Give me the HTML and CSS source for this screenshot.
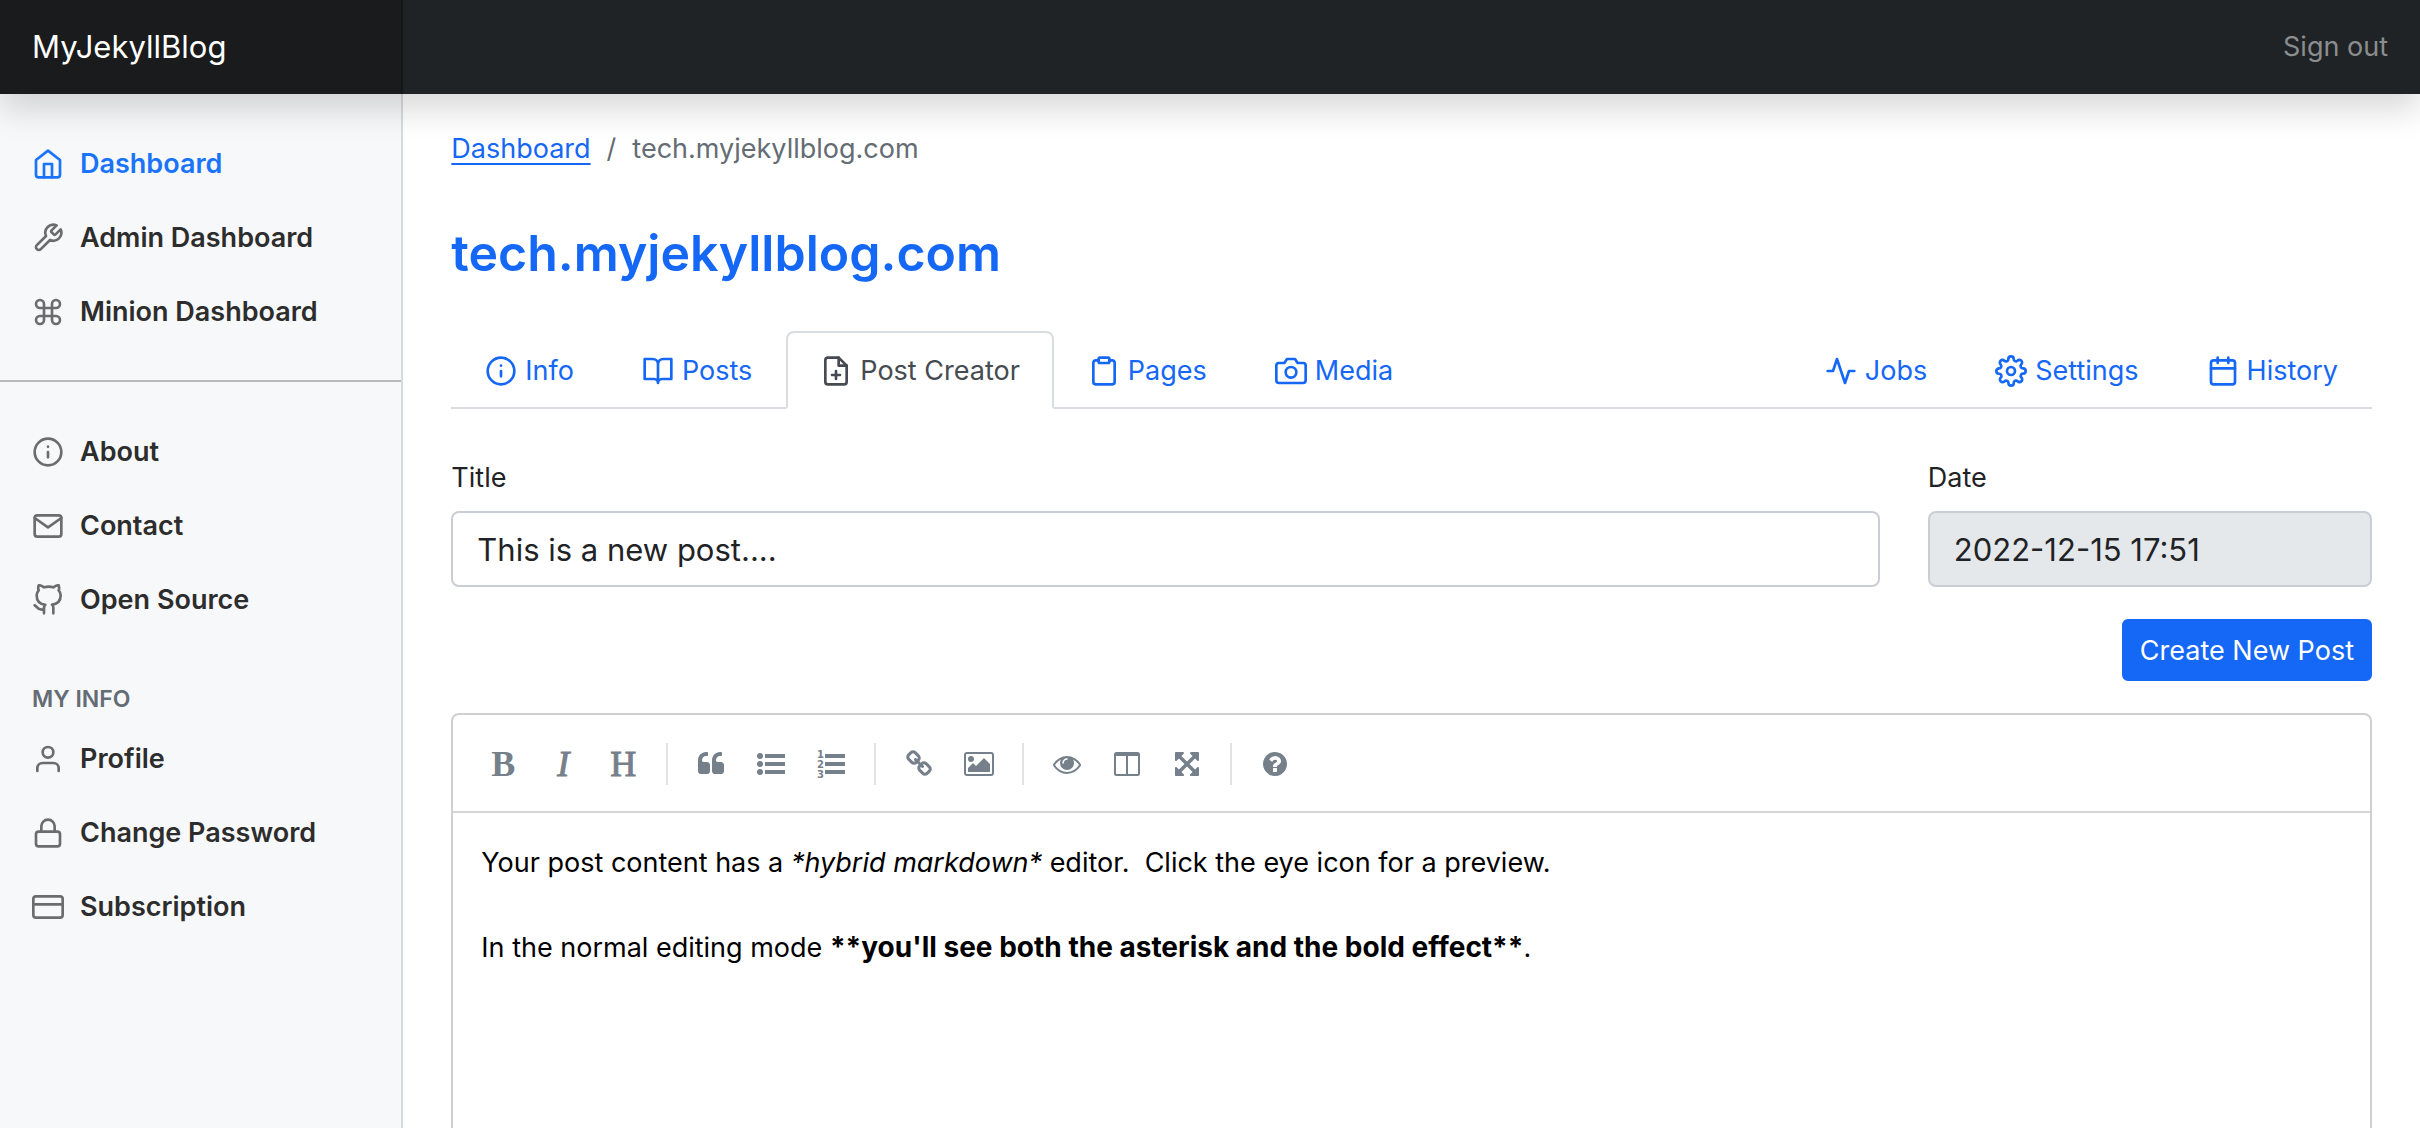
FILE: index.html
```html
<!DOCTYPE html>
<html lang="en">
<head>
<meta charset="utf-8">
<meta name="viewport" content="width=device-width, initial-scale=1">
<title>tech.myjekyllblog.com - MyJekyllBlog</title>
<link rel="stylesheet" href="styles.css">
</head>
<body>
<header class="topbar">
  <a class="brand" href="#">MyJekyllBlog</a>
  <a class="signout" href="#">Sign out</a>
</header>
<div class="shell">
  <nav class="sidebar" aria-label="Main">
    <ul class="side-list">
      <li><a class="side-link active" href="#"><svg class="icon" viewBox="0 0 24 24"><path d="M3 9l9-7 9 7v11a2 2 0 0 1-2 2H5a2 2 0 0 1-2-2z"/><path d="M9 22V12h6v10"/></svg>Dashboard</a></li>
      <li><a class="side-link" href="#"><svg class="icon" viewBox="0 0 24 24"><path d="M14.7 6.3a1 1 0 0 0 0 1.4l1.6 1.6a1 1 0 0 0 1.4 0l3.77-3.77a6 6 0 0 1-7.94 7.94l-6.91 6.91a2.12 2.12 0 0 1-3-3l6.91-6.91a6 6 0 0 1 7.94-7.94l-3.76 3.76z"/></svg>Admin Dashboard</a></li>
      <li><a class="side-link" href="#"><svg class="icon" viewBox="0 0 24 24"><path d="M18 3a3 3 0 0 0-3 3v12a3 3 0 0 0 3 3 3 3 0 0 0 3-3 3 3 0 0 0-3-3H6a3 3 0 0 0-3 3 3 3 0 0 0 3 3 3 3 0 0 0 3-3V6a3 3 0 0 0-3-3 3 3 0 0 0-3 3 3 3 0 0 0 3 3h12a3 3 0 0 0 3-3 3 3 0 0 0-3-3z"/></svg>Minion Dashboard</a></li>
    </ul>
    <hr class="side-rule">
    <ul class="side-list">
      <li><a class="side-link" href="#"><svg class="icon" viewBox="0 0 24 24"><circle cx="12" cy="12" r="10"/><path d="M12 16v-4M12 8h.01"/></svg>About</a></li>
      <li><a class="side-link" href="#"><svg class="icon" viewBox="0 0 24 24"><path d="M4 4h16c1.1 0 2 .9 2 2v12c0 1.100-.9 2-2 2H4c-1.100 0-2-.9-2-2V6c0-1.100.9-2 2-2z"/><path d="M22 6l-10 7L2 6"/></svg>Contact</a></li>
      <li><a class="side-link" href="#"><svg class="icon" viewBox="0 0 24 24"><path d="M9 19c-5 1.500-5-2.500-7-3m14 6v-3.870a3.370 3.370 0 0 0-.94-2.610c3.140-.35 6.440-1.540 6.440-7A5.440 5.440 0 0 0 20 4.770 5.070 5.070 0 0 0 19.910 1S18.730.65 16 2.480a13.380 13.380 0 0 0-7 0C6.270.65 5.090 1 5.090 1A5.070 5.070 0 0 0 5 4.770a5.440 5.440 0 0 0-1.500 3.780c0 5.420 3.300 6.610 6.440 7A3.370 3.370 0 0 0 9 18.130V22"/></svg>Open Source</a></li>
    </ul>
    <h2 class="side-heading">MY INFO</h2>
    <ul class="side-list">
      <li><a class="side-link" href="#"><svg class="icon" viewBox="0 0 24 24"><path d="M20 21v-2a4 4 0 0 0-4-4H8a4 4 0 0 0-4 4v2"/><circle cx="12" cy="7" r="4"/></svg>Profile</a></li>
      <li><a class="side-link" href="#"><svg class="icon" viewBox="0 0 24 24"><rect x="3" y="11" width="18" height="11" rx="2"/><path d="M7 11V7a5 5 0 0 1 10 0v4"/></svg>Change Password</a></li>
      <li><a class="side-link" href="#"><svg class="icon" viewBox="0 0 24 24"><rect x="1" y="4" width="22" height="16" rx="2"/><path d="M1 10h22"/></svg>Subscription</a></li>
    </ul>
  </nav>
  <main class="main">
    <nav class="crumbs" aria-label="Breadcrumb"><a href="#">Dashboard</a><span>/</span><span>tech.myjekyllblog.com</span></nav>
    <h1 class="title">tech.myjekyllblog.com</h1>
    <nav class="tabs" aria-label="Blog">
      <a class="tab" href="#"><svg class="icon" viewBox="0 0 24 24"><circle cx="12" cy="12" r="10"/><path d="M12 16v-4M12 8h.01"/></svg>Info</a>
      <a class="tab" href="#"><svg class="icon" viewBox="0 0 24 24"><path d="M2 3h6a4 4 0 0 1 4 4v14a3 3 0 0 0-3-3H2zM22 3h-6a4 4 0 0 0-4 4v14a3 3 0 0 1 3-3h7z"/></svg>Posts</a>
      <a class="tab active" href="#" aria-current="page"><svg class="icon" viewBox="0 0 24 24"><path d="M14 2H6a2 2 0 0 0-2 2v16a2 2 0 0 0 2 2h12a2 2 0 0 0 2-2V8z"/><path d="M14 2v6h6M12 18v-6M9 15h6"/></svg>Post Creator</a>
      <a class="tab" href="#"><svg class="icon" viewBox="0 0 24 24"><path d="M16 4h2a2 2 0 0 1 2 2v14a2 2 0 0 1-2 2H6a2 2 0 0 1-2-2V6a2 2 0 0 1 2-2h2"/><rect x="8" y="2" width="8" height="4" rx="1"/></svg>Pages</a>
      <a class="tab" href="#"><svg class="icon" viewBox="0 0 24 24"><path d="M23 19a2 2 0 0 1-2 2H3a2 2 0 0 1-2-2V8a2 2 0 0 1 2-2h4l2-3h6l2 3h4a2 2 0 0 1 2 2z"/><circle cx="12" cy="13" r="4"/></svg>Media</a>
      <a class="tab push" href="#"><svg class="icon" viewBox="0 0 24 24"><path d="M22 12h-4l-3 9L9 3l-3 9H2"/></svg>Jobs</a>
      <a class="tab" href="#"><svg class="icon" viewBox="0 0 24 24"><circle cx="12" cy="12" r="3"/><path d="M19.400 15a1.650 1.650 0 0 0 .33 1.820l.06.06a2 2 0 0 1 0 2.830 2 2 0 0 1-2.830 0l-.06-.06a1.650 1.650 0 0 0-1.820-.33 1.650 1.650 0 0 0-1 1.510V21a2 2 0 0 1-2 2 2 2 0 0 1-2-2v-.09A1.650 1.650 0 0 0 9 19.400a1.650 1.650 0 0 0-1.820.33l-.06.06a2 2 0 0 1-2.830 0 2 2 0 0 1 0-2.830l.06-.06a1.650 1.650 0 0 0 .33-1.820 1.650 1.650 0 0 0-1.510-1H3a2 2 0 0 1-2-2 2 2 0 0 1 2-2h.09A1.650 1.650 0 0 0 4.600 9a1.650 1.650 0 0 0-.33-1.820l-.06-.06a2 2 0 0 1 0-2.830 2 2 0 0 1 2.830 0l.06.06a1.650 1.650 0 0 0 1.820.33H9a1.650 1.650 0 0 0 1-1.510V3a2 2 0 0 1 2-2 2 2 0 0 1 2 2v.09a1.650 1.650 0 0 0 1 1.510 1.650 1.650 0 0 0 1.820-.33l.06-.06a2 2 0 0 1 2.830 0 2 2 0 0 1 0 2.830l-.06.06a1.650 1.650 0 0 0-.33 1.820V9a1.650 1.650 0 0 0 1.510 1H21a2 2 0 0 1 2 2 2 2 0 0 1-2 2h-.09a1.650 1.650 0 0 0-1.510 1z"/></svg>Settings</a>
      <a class="tab" href="#"><svg class="icon" viewBox="0 0 24 24"><rect x="3" y="4" width="18" height="18" rx="2"/><path d="M16 2v4M8 2v4M3 10h18"/></svg>History</a>
    </nav>
    <form class="post-form" onsubmit="return false">
      <div class="fields">
        <div class="field"><label for="post-title">Title</label><input id="post-title" type="text" value="This is a new post...."></div>
        <div class="field"><label for="post-date">Date</label><input id="post-date" type="text" value="2022-12-15 17:51" disabled></div>
      </div>
      <button class="submit" type="submit">Create New Post</button>
      <div class="editor">
        <div class="toolbar" role="toolbar" aria-label="Formatting">
          <button class="tool letter bold" type="button" title="Bold">B</button>
          <button class="tool letter italic" type="button" title="Italic">I</button>
          <button class="tool letter" type="button" title="Heading">H</button>
          <i class="sep"></i>
          <button class="tool" type="button" title="Quote"><svg viewBox="0 0 1792 1792"><path d="M832 960v384q0 80-56 136t-136 56h-384q-80 0-136-56t-56-136v-704q0-104 40.500-198.500t109.500-163.500 163.500-109.500 198.500-40.500h64q26 0 45 19t19 45v128q0 26-19 45t-45 19h-64q-106 0-181 75t-75 181v32q0 40 28 68t68 28h224q80 0 136 56t56 136zm896 0v384q0 80-56 136t-136 56h-384q-80 0-136-56t-56-136v-704q0-104 40.500-198.500t109.500-163.500 163.500-109.500 198.500-40.500h64q26 0 45 19t19 45v128q0 26-19 45t-45 19h-64q-106 0-181 75t-75 181v32q0 40 28 68t68 28h224q80 0 136 56t56 136z"/></svg></button>
          <button class="tool" type="button" title="Generic list"><svg viewBox="0 0 28 28"><circle cx="3" cy="6" r="3"/><circle cx="3" cy="14" r="3"/><circle cx="3" cy="22" r="3"/><path d="M8 4h20v4H8zM8 12h20v4H8zM8 20h20v4H8z"/></svg></button>
          <button class="tool" type="button" title="Numbered list"><svg viewBox="0 0 28 28"><text x="0" y="8">1</text><text x="0" y="18">2</text><text x="0" y="28">3</text><path d="M8 4h20v4H8zM8 12h20v4H8zM8 20h20v4H8z"/></svg></button>
          <i class="sep"></i>
          <button class="tool" type="button" title="Create link"><svg viewBox="0 0 1792 1792"><path d="M1520 1216q0-40-28-68l-208-208q-28-28-68-28-42 0-72 32 3 3 19 18.500t21.500 21.500 15 19 13 25.500 3.500 27.500q0 40-28 68t-68 28q-15 0-27.500-3.500t-25.500-13-19-15-21.500-21.500-18.500-19q-33 31-33 73 0 40 28 68l206 207q27 27 68 27 40 0 68-26l147-146q28-28 28-67zm-703-705q0-40-28-68l-206-207q-28-28-68-28-39 0-68 27l-147 146q-28 28-28 67 0 40 28 68l208 208q27 27 68 27 42 0 72-31-3-3-19-18.500t-21.500-21.500-15-19-13-25.500-3.500-27.500q0-40 28-68t68-28q15 0 27.500 3.500t25.500 13 19 15 21.500 21.500 18.500 19q33-31 33-73zm895 705q0 120-85 203l-147 146q-83 83-203 83-121 0-204-85l-206-207q-83-83-83-203 0-123 88-209l-88-88q-86 88-208 88-120 0-204-84l-208-208q-84-84-84-204t85-203l147-146q83-83 203-83 121 0 204 85l206 207q83 83 83 203 0 123-88 209l88 88q86-88 208-88 120 0 204 84l208 208q84 84 84 204z"/></svg></button>
          <button class="tool" type="button" title="Insert image"><svg viewBox="0 0 28 28"><rect x="0" y="3" width="28" height="22" rx="2" fill="none" stroke="currentColor" stroke-width="2"/><circle cx="6" cy="9" r="3"/><path d="M3 22v-4l5-5 3 3 8-8 6 6v8z"/></svg></button>
          <i class="sep"></i>
          <button class="tool" type="button" title="Toggle preview"><svg viewBox="0 0 1792 1792"><path d="M1664 960q-152-236-381-353 61 104 61 225 0 185-131.500 316.500t-316.500 131.500-316.500-131.500-131.500-316.500q0-121 61-225-229 117-381 353 133 205 333.500 326.500t434.500 121.500 434.500-121.500 333.500-326.500zm-720-384q0-20-14-34t-34-14q-125 0-214.500 89.500t-89.500 214.500q0 20 14 34t34 14 34-14 14-34q0-86 61-147t147-61q20 0 34-14t14-34zm848 384q0 34-20 69-140 230-376.500 368.500t-499.500 138.500-499.500-139-376.500-368q-20-35-20-69t20-69q140-229 376.500-368t499.500-139 499.500 139 376.500 368q20 35 20 69z"/></svg></button>
          <button class="tool" type="button" title="Toggle side by side"><svg viewBox="0 0 28 28"><path fill-rule="evenodd" d="M3.500 2h21A2.500 2.500 0 0 1 27 4.500v19a2.500 2.500 0 0 1-2.500 2.500h-21A2.500 2.500 0 0 1 1 23.500v-19A2.500 2.500 0 0 1 3.500 2zM3 6v17.500a.5.500 0 0 0 .5.500H13V6zM15 6v18h9.500a.5.500 0 0 0 .5-.5V6z"/></svg></button>
          <button class="tool" type="button" title="Toggle fullscreen"><svg viewBox="0 0 1792 1792"><path d="M1411 541l-355 355 355 355 144-144q29-31 70-14 39 17 39 59v448q0 26-19 45t-45 19h-448q-42 0-59-40-17-39 14-69l144-144-355-355-355 355 144 144q31 30 14 69-17 40-59 40h-448q-26 0-45-19t-19-45v-448q0-42 40-59 39-17 69 14l144 144 355-355-355-355-144 144q-19 19-45 19-12 0-24-5-40-17-40-59v-448q0-26 19-45t45-19h448q42 0 59 40 17 39-14 69l-144 144 355 355 355-355-144-144q-31-30-14-69 17-40 59-40h448q26 0 45 19t19 45v448q0 42-39 59-13 5-25 5-26 0-45-19z"/></svg></button>
          <i class="sep"></i>
          <button class="tool" type="button" title="Markdown guide"><svg viewBox="0 0 1792 1792"><path d="M1024 1376v-192q0-14-9-23t-23-9h-192q-14 0-23 9t-9 23v192q0 14 9 23t23 9h192q14 0 23-9t9-23zm256-672q0-88-55.500-163t-138.500-116-170-41q-243 0-371 213-15 24 8 42l132 100q7 6 19 6 16 0 25-12 53-68 86-92 34-24 86-24 48 0 85.500 26t37.500 59q0 38-20 61t-68 45q-63 28-115.500 86.500t-52.500 125.500v36q0 14 9 23t23 9h192q14 0 23-9t9-23q0-19 21.500-49.500t54.500-49.500q32-18 49-28.500t46-35 44.500-48 28-60.500 12.500-81zm384 192q0 209-103 385.500t-279.500 279.500-385.500 103-385.500-103-279.500-279.500-103-385.500 103-385.500 279.500-279.500 385.500-103 385.500 103 279.500 279.500 103 385.500z"/></svg></button>
        </div>
        <div class="content" role="textbox" aria-multiline="true" aria-label="Post content" contenteditable="true" spellcheck="false">
          <p>Your post content has a <em>*hybrid markdown*</em> editor.&nbsp; Click the eye icon for a preview.</p>
          <p>In the normal editing mode <strong>**you'll see both the asterisk and the bold effect**</strong>.</p>
        </div>
      </div>
    </form>
  </main>
</div>
</body>
</html>
```
FILE: styles.css
```css
:root {
  --blue: #1567f6;
  --ink: #1f2326;
  --muted: #646c74;
  --line: #d9dde2;
  --tool: #76808a;
}

* { box-sizing: border-box; }

body {
  margin: 0;
  height: 100vh;
  display: flex;
  flex-direction: column;
  overflow: hidden;
  background: #fff;
  color: var(--ink);
  font: 27px/42px Inter, "Liberation Sans", sans-serif;
}

a { color: var(--blue); text-decoration: none; }

.icon {
  width: 32px;
  height: 32px;
  flex: none;
  fill: none;
  stroke: currentColor;
  stroke-width: 2;
  stroke-linecap: round;
  stroke-linejoin: round;
}

.topbar {
  position: relative;
  z-index: 1;
  flex: none;
  display: flex;
  justify-content: space-between;
  align-items: center;
  background: #1f2326;
  box-shadow: 0 16px 32px rgba(0, 0, 0, .15);
}

.brand {
  width: 16.6667%;
  padding: 23px 32px;
  background: #1a1b1c;
  border-right: 2px solid #151617;
  color: #fff;
  font-size: 31px;
  line-height: 48px;
}

.signout { padding: 0 32px; color: #8b8d8f; }

.shell { flex: 1; display: flex; min-height: 0; }

.sidebar {
  flex: none;
  width: 16.6667%;
  padding-top: 33px;
  background: #f7f8fa;
  border-right: 2px solid #d9dadc;
}

.side-list { list-style: none; margin: 0; padding: 0; }

.side-link {
  display: flex;
  align-items: center;
  gap: 16px;
  padding: 16px 32px;
  color: #2d2d2d;
  font-weight: 600;
}
.side-link .icon { color: #6c6c6c; }
.side-link.active, .side-link.active .icon { color: #1974fb; }

.side-rule { margin: 31px 0 33px; border: 0; border-top: 2px solid #b9babc; }

.side-heading {
  margin: 48px 0 8px;
  padding: 0 32px;
  color: var(--muted);
  font-size: 23px;
  font-weight: 600;
  line-height: 29px;
}

.main {
  flex: 1;
  min-width: 0;
  padding: 34px 48px 48px;
  overflow: auto;
  scrollbar-width: none;
}

.crumbs { display: flex; gap: 16px; color: var(--muted); }
.crumbs a { text-decoration: underline; text-underline-offset: 5px; }

.title {
  margin: 48px 0 43px;
  color: var(--blue);
  font-size: 50px;
  font-weight: 600;
  line-height: 70px;
}

.tabs { display: flex; border-bottom: 2px solid var(--line); }

.tab {
  display: flex;
  align-items: center;
  gap: 8px;
  margin-bottom: -2px;
  padding: 17px 32px 15px;
  border: 2px solid transparent;
  border-radius: 8px 8px 0 0;
}
.tab.active {
  color: #454b51;
  background: #fff;
  border-color: var(--line);
  border-bottom-color: #fff;
}
.push { margin-left: auto; }

.post-form { display: flex; flex-direction: column; margin-top: 48px; }

.fields { display: grid; grid-template-columns: repeat(4, minmax(0, 1fr)); column-gap: 48px; }
.field { display: flex; flex-direction: column; gap: 12px; }
.field:first-child { grid-column: span 3; }

input {
  width: 100%;
  height: 76px;
  padding: 12px 24px;
  border: 2px solid #c9ced5;
  border-radius: 8px;
  background: #fff;
  color: var(--ink);
  font: inherit;
  font-size: 31px;
  line-height: 48px;
}
input:disabled { background: #e5e8eb; opacity: 1; }

.submit {
  align-self: flex-end;
  margin: 32px 0;
  padding: 9px 16px 7px;
  border: 2px solid var(--blue);
  border-radius: 6px;
  background: var(--blue);
  color: #fff;
  font: inherit;
}

.editor { border: 2px solid #d0d0d0; border-radius: 8px; }

.toolbar {
  display: flex;
  align-items: center;
  padding: 19px 20px 17px;
  border-bottom: 2px solid #d6d6d6;
}

.tool {
  display: flex;
  align-items: center;
  justify-content: center;
  width: 60px;
  height: 60px;
  padding: 0;
  border: 0;
  background: none;
  color: var(--tool);
}
.tool svg { width: 28px; height: 28px; fill: currentColor; overflow: visible; }
.tool text { font: bold 10px "DejaVu Sans", sans-serif; }
.letter { font: 36px/60px "Liberation Serif", serif; -webkit-text-stroke: 1px; }
.bold { font-weight: bold; -webkit-text-stroke: 0; }
.italic { font-style: italic; }

.sep { width: 2px; height: 42px; margin: 0 13px; background: #e2e2e2; }

.content { min-height: 600px; padding: 29px 28px; color: #000; outline: 0; }
.content p { margin: 0 0 42px; }
.content strong { font-size: 28px; font-weight: 700; }
```
